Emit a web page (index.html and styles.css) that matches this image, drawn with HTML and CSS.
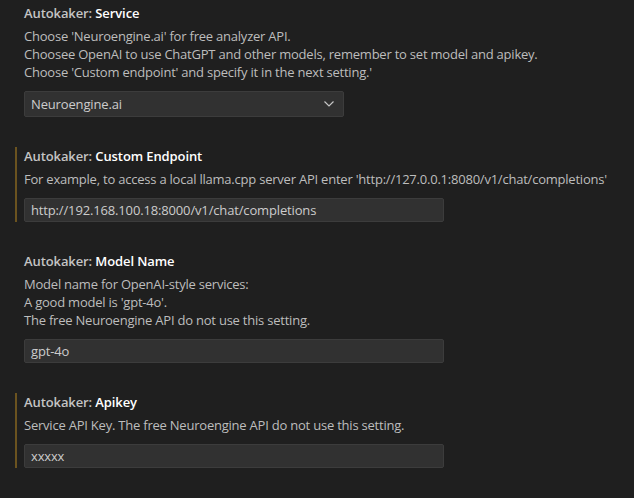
FILE: index.html
```html
<!DOCTYPE html>
<html lang="en">
<head>
<meta charset="utf-8">
<title>Settings</title>
<link rel="stylesheet" href="styles.css">
</head>
<body>
<div class="settings">
  <div class="setting">
    <div class="setting-body">
      <div class="setting-title"><span class="cat">Autokaker: </span><span class="label">Service</span></div>
      <div class="setting-desc">
        <p>Choose 'Neuroengine.ai' for free analyzer API.</p>
        <p>Choosee OpenAI to use ChatGPT and other models, remember to set model and apikey.</p>
        <p>Choose 'Custom endpoint' and specify it in the next setting.'</p>
      </div>
      <div class="select">
        <span class="select-value">Neuroengine.ai</span>
        <svg class="chevron" width="10" height="6" viewBox="0 0 10 6"><polyline points="0.5,0.5 5,5 9.5,0.5" fill="none" stroke="#c5c5c5" stroke-width="1.2"/></svg>
      </div>
    </div>
  </div>

  <div class="setting">
    <div class="setting-body modified">
      <div class="setting-title"><span class="cat">Autokaker: </span><span class="label">Custom Endpoint</span></div>
      <div class="setting-desc">
        <p>For example, to access a local llama.cpp server API enter 'http://127.0.0.1:8080/v1/chat/completions'</p>
      </div>
      <div class="input">http://192.168.100.18:8000/v1/chat/completions</div>
    </div>
  </div>

  <div class="setting">
    <div class="setting-body">
      <div class="setting-title"><span class="cat">Autokaker: </span><span class="label">Model Name</span></div>
      <div class="setting-desc">
        <p>Model name for OpenAI-style services:</p>
        <p>A good model is 'gpt-4o'.</p>
        <p>The free Neuroengine API do not use this setting.</p>
      </div>
      <div class="input">gpt-4o</div>
    </div>
  </div>

  <div class="setting">
    <div class="setting-body modified">
      <div class="setting-title"><span class="cat">Autokaker: </span><span class="label">Apikey</span></div>
      <div class="setting-desc">
        <p>Service API Key. The free Neuroengine API do not use this setting.</p>
      </div>
      <div class="input">xxxxx</div>
    </div>
  </div>
</div>
</body>
</html>
```

FILE: styles.css
```css
html, body {
  margin: 0;
  padding: 0;
  background: #1f1f1f;
}

body {
  font-family: "Open Sans", "Noto Sans", sans-serif;
  font-size: 13px;
  color: #cccccc;
  height: 498px;
  overflow: hidden;
}

.settings {
  display: flex;
  flex-direction: column;
  gap: 33px;
  padding-top: 7px;
}

.setting {
  padding-left: 15px;
}

.setting-body {
  border-left: 2px solid transparent;
  padding-left: 7px;
}

.setting-body.modified {
  border-left-color: #6b531f;
}

.setting-title {
  line-height: 18px;
  margin-top: -3px;
  font-weight: 600;
  letter-spacing: -0.1px;
}

.cat {
  color: #c4c4c4;
}

.label {
  color: #ffffff;
}

.setting-desc {
  margin-top: 5px;
  line-height: 18px;
  color: #bdbdbd;
  letter-spacing: -0.22px;
}

.setting-desc p {
  margin: 0;
}

.select {
  margin-top: 10px;
  box-sizing: border-box;
  width: 320px;
  height: 26px;
  background: #313131;
  border: 1px solid #3c3c3c;
  border-radius: 2px;
  display: flex;
  align-items: center;
  justify-content: space-between;
  padding: 0 9px 0 6px;
  color: #cccccc;
  letter-spacing: -0.15px;
}

.chevron {
  display: block;
}

.input {
  margin-top: 10px;
  box-sizing: border-box;
  width: 420px;
  height: 24px;
  background: #313131;
  border: 1px solid #3c3c3c;
  border-radius: 2px;
  display: flex;
  align-items: center;
  padding: 0 6px;
  color: #cccccc;
  letter-spacing: -0.15px;
}
```
